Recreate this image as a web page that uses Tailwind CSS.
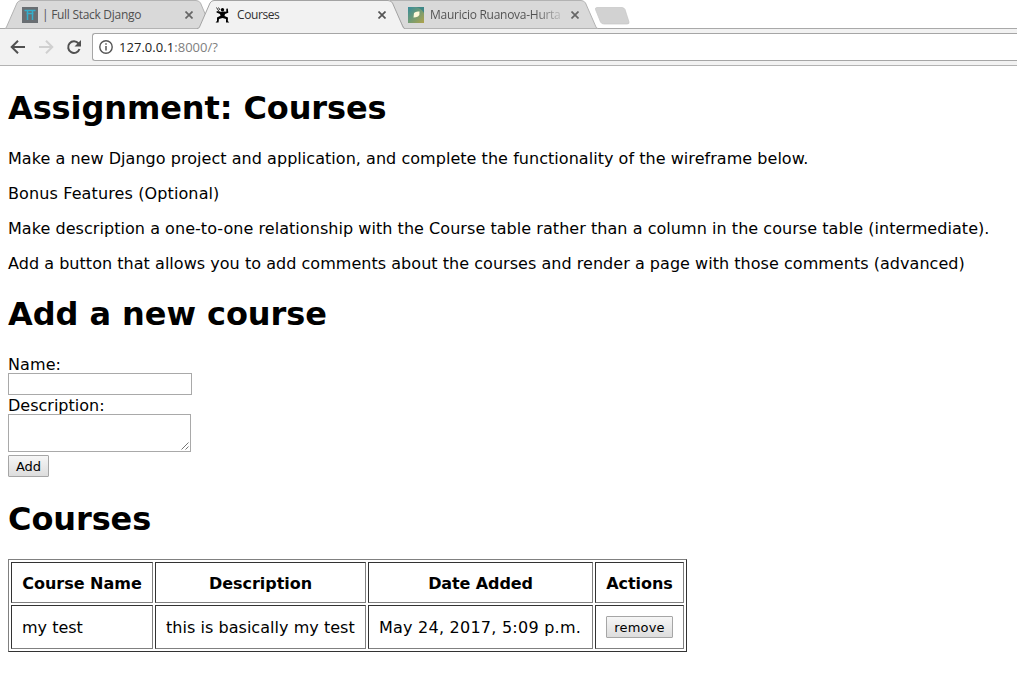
<!DOCTYPE html>
<html lang="en">
<head>
<meta charset="utf-8">
<title>Courses</title>
<script src="https://cdn.jsdelivr.net/npm/@tailwindcss/browser@4"></script>
</head>
<body class="w-[1017px] h-[697px] overflow-hidden bg-white text-black font-['Verdana','DejaVu_Sans',sans-serif] text-[16px] leading-[19px]">
<header class="relative h-[66px] font-['Open_Sans',sans-serif]">
  <svg class="absolute inset-0" width="1017" height="66" viewBox="0 0 1017 66">
    <rect y="28" width="1017" height="38" fill="#f2f2f2"/>
    <path d="M0 28.5H1017" stroke="#a9a9a9"/>
    <path d="M404 .5H581Q584 .5 585.500 3L596 27Q596.500 28.500 598 28.500H404L390 .5Z" fill="#d9d9d9" stroke="#b3b3b3"/>
    <path d="M5 28.500Q6 28.500 6.500 27L17 3Q18.500 .5 21 .5H196Q199 .5 200.500 3L206 16V28.500Z" fill="#d9d9d9" stroke="#b3b3b3"/>
    <path d="M197 29.500V28.500Q199 28.500 199.500 27L210 3Q211.500 .5 214 .5H388Q391 .5 392.500 3L403 27Q403.500 28.500 405 28.500V29.500Z" fill="#f2f2f2"/>
    <path d="M197 28.500Q199 28.500 199.500 27L210 3Q211.500 .5 214 .5H388Q391 .5 392.500 3L403 27Q403.500 28.500 405 28.500" fill="none" stroke="#a3a3a3"/>
    <path d="M597 7.500H622Q624 7.500 625 9.500L629 22Q629.500 24 627 24H604Q601.500 24 600.500 22L595.500 9.500Q595 7.500 597 7.500Z" fill="#d2d2d2" stroke="#c6c6c6" stroke-width=".7"/>
    <path d="M0 65.500H1017" stroke="#b3b3b3"/>
  </svg>
  <div class="relative flex h-[29px] items-center text-[12px] leading-4 text-[#505050]">
    <div class="flex w-[193px] ml-[22px] items-center">
      <svg class="shrink-0" width="16" height="16"><rect width="16" height="16" fill="#696e72"/><path d="M2.500 3.500H13.500M4.500 6.500H11.500M5.500 3.500V13M10.500 3.500V13" stroke="#35aecb" stroke-width="1.500" fill="none"/></svg>
      <span class="ml-[4px] w-[100px] whitespace-nowrap tracking-[-0.29px]">| Full Stack Django</span>
      <svg class="ml-[43px]" width="8" height="8"><path d="M.5.5L7.500 7.500M7.500.5L.5 7.500" stroke="#666" stroke-width="1.700"/></svg>
    </div>
    <div class="flex w-[193px] items-center text-[#303030]">
      <svg class="shrink-0" width="16" height="16"><circle cx="7.500" cy="2.800" r="1.700"/><path d="M1.500 .5L5 6M3.500 .5L5 3" stroke="#000" stroke-width=".8" fill="none"/><path d="M1.800 4L5 4.800L9 4.500L11.300 4.700L11.300 1.800L12.800 1.500L13.300 5.800L10 7L9.500 9L13 10.500L12.800 14L14.300 15.500H11L11 12L7.500 11L4 12L3.500 15.500H.5L2 14L2 10.500L5.500 8.800L5 7L1.500 5.500Z"/></svg>
      <span class="ml-[6px] w-[98px] tracking-[-0.4px]">Courses</span>
      <svg class="ml-[43px]" width="8" height="8"><path d="M.5.5L7.500 7.500M7.500.5L.5 7.500" stroke="#555" stroke-width="1.700"/></svg>
    </div>
    <div class="flex w-[193px] items-center">
      <svg class="shrink-0" width="16" height="16"><defs><linearGradient id="leaf" x1="0" y1="0" x2="1" y2="1"><stop stop-color="#378c9b"/><stop offset=".5" stop-color="#719b75"/><stop offset="1" stop-color="#b0a34b"/></linearGradient></defs><rect width="16" height="16" fill="url(#leaf)"/><path d="M8 0H16V6Q13 1 8 0Z" fill="#3f8787"/><path d="M5.500 10.500L6 6Q7.500 4 11.500 4.500Q12 8 10 9.500Q8 10.500 5.500 10.500Z" fill="#fff9d9"/></svg>
      <span class="ml-[6px] w-[131px] whitespace-nowrap bg-linear-to-r from-[#505050] from-80% to-[#505050]/20 bg-clip-text text-transparent tracking-[-0.27px]">Mauricio Ruanova-Hurta</span>
      <svg class="ml-[10px] shrink-0" width="8" height="8"><path d="M.5.5L7.500 7.500M7.500.5L.5 7.500" stroke="#666" stroke-width="1.700"/></svg>
    </div>
  </div>
  <div class="relative flex h-[36px] pt-[4px]">
    <div class="flex w-[92px] shrink-0 pl-[10px] pt-[6px]">
      <svg width="76" height="16" viewBox="0 0 76 16" fill="none"><path d="M15 8H2M8 1.700L1.700 8L8 14.300" stroke="#505050" stroke-width="2"/><path d="M29 8H42M36 1.700L42.300 8L36 14.300" stroke="#d0d0d0" stroke-width="2"/><path d="M68.500 4.500A5.800 5.800 0 1 0 69.500 10" stroke="#505050" stroke-width="2"/><path d="M71 1V7.500H64.500Z" fill="#505050"/></svg>
    </div>
    <div class="flex h-[28px] flex-1 items-center rounded-l-[3px] border border-r-0 border-[#a6a6a6] bg-white pl-[6px]">
      <svg width="14" height="14" viewBox="0 0 14 14"><circle cx="7" cy="7" r="6.200" fill="none" stroke="#555" stroke-width="1.400"/><path d="M7 6V10.500M7 3.200V4.800" stroke="#555" stroke-width="1.500"/></svg>
      <span class="ml-[6px] text-[13px] leading-4 tracking-[0.04px] text-[#222]">127.0.0.1<span class="text-[#808080]">:8000/?</span></span>
    </div>
  </div>
</header>
<main class="px-2 pt-[23px]">
  <h1 class="h-[38px] text-[32px] leading-[38px] font-bold whitespace-nowrap tracking-[-0.1px]">Assignment: Courses</h1>
  <div class="mt-[22px] flex flex-col gap-4 whitespace-nowrap">
    <p class="h-[19px] tracking-[0.042px]">Make a new Django project and application, and complete the functionality of the wireframe below.</p>
    <p class="h-[19px] tracking-[0.12px]">Bonus Features (Optional)</p>
    <p class="h-[19px] tracking-[0.05px]">Make description a one-to-one relationship with the Course table rather than a column in the course table (intermediate).</p>
    <p class="h-[19px] tracking-[0.036px]">Add a button that allows you to add comments about the courses and render a page with those comments (advanced)</p>
  </div>
  <h1 class="mt-[22px] h-[38px] text-[32px] leading-[38px] font-bold tracking-[-0.06px]">Add a new course</h1>
  <form class="mt-[22px] flex flex-col items-start">
    <label class="h-[18px] tracking-[0.1px]">Name:</label>
    <input class="h-[22px] w-[184px] border border-[#a9a9a9] bg-white">
    <label class="mt-px h-[18px]">Description:</label>
    <div class="relative h-[38px] w-[183px] border border-[#a9a9a9]">
      <svg class="absolute right-px bottom-px" width="8" height="8"><path d="M.5 7.500L7.500.5M4.500 7.500L7.500 4.500" stroke="#666" stroke-width=".9"/></svg>
    </div>
    <button type="button" class="mt-[3px] h-[22px] w-[41px] rounded-[1px] border border-[#a6a6a6] bg-linear-to-b from-[#f6f6f6] to-[#dddddd] pt-px text-[13px] leading-4">Add</button>
  </form>
  <h1 class="mt-[23px] h-[38px] text-[32px] leading-[38px] font-bold tracking-[-0.1px]">Courses</h1>
  <div class="mt-[21px] grid h-[93px] w-[679px] grid-cols-[142px_211px_225px_89px] grid-rows-[41px_44px] gap-[2px] border border-t-[#808080] border-l-[#808080] border-r-[#333] border-b-[#333] p-[2px] whitespace-nowrap *:flex *:items-center *:border *:border-t-[#333] *:border-l-[#333] *:border-r-[#808080] *:border-b-[#808080]">
    <div class="justify-center pt-px font-bold">Course Name</div>
    <div class="justify-center pt-px font-bold tracking-[-0.05px]">Description</div>
    <div class="justify-center pt-px font-bold tracking-[-0.1px]">Date Added</div>
    <div class="justify-center pt-px font-bold tracking-[-0.05px]">Actions</div>
    <div class="pl-[10px]">my test</div>
    <div class="pl-[10px] tracking-[0.04px]">this is basically my test</div>
    <div class="pl-[10px] tracking-[0.24px]">May 24, 2017, 5:09 p.m.</div>
    <div class="pl-[10px]"><button type="button" class="h-[22px] w-[67px] rounded-[1px] border border-[#a6a6a6] bg-linear-to-b from-[#f6f6f6] to-[#dddddd] pt-px text-[13px] leading-4 tracking-[0.2px]">remove</button></div>
  </div>
</main>
</body>
</html>
